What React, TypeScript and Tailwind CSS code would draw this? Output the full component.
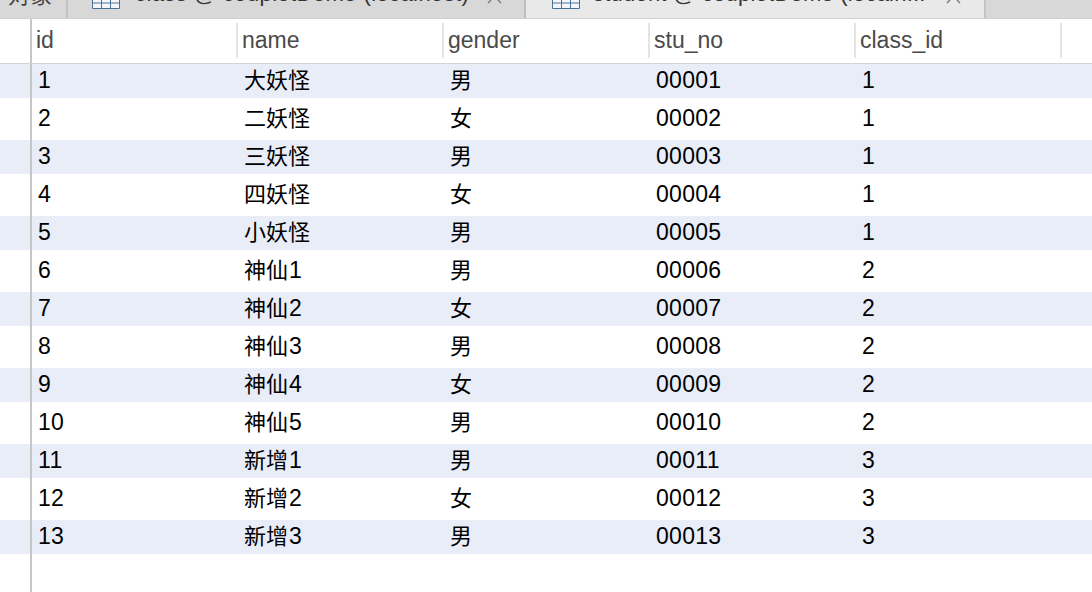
const rows: [string, string, string, string, string][] = [
  ["1", "大妖怪", "男", "00001", "1"],
  ["2", "二妖怪", "女", "00002", "1"],
  ["3", "三妖怪", "男", "00003", "1"],
  ["4", "四妖怪", "女", "00004", "1"],
  ["5", "小妖怪", "男", "00005", "1"],
  ["6", "神仙1", "男", "00006", "2"],
  ["7", "神仙2", "女", "00007", "2"],
  ["8", "神仙3", "男", "00008", "2"],
  ["9", "神仙4", "女", "00009", "2"],
  ["10", "神仙5", "男", "00010", "2"],
  ["11", "新增1", "男", "00011", "3"],
  ["12", "新增2", "女", "00012", "3"],
  ["13", "新增3", "男", "00013", "3"],
];
const heads = ["id", "name", "gender", "stu_no", "class_id"];

function TableIcon() {
  return (
    <svg width="28" height="9" viewBox="0 0 28 9" className="shrink-0" aria-hidden="true">
      <path d="M0.5 0V8.5H27.5V0M0.5 3H27.5M9.5 0V8.5M18.5 0V8.5" fill="#f4f6f9" stroke="#4a7196" strokeWidth="1" />
    </svg>
  );
}

function CloseTips() {
  return (
    <svg width="15" height="4" viewBox="0 0 15 4" className="shrink-0" aria-hidden="true">
      <path d="M4 0L1 3M11 0L14 3" fill="none" stroke="#777" strokeWidth="1.4" />
    </svg>
  );
}

export default function App() {
  return (
    <div className="w-[1092px] h-[592px] overflow-hidden bg-white flex flex-col font-['Liberation_Sans','Noto_Sans_CJK_SC',sans-serif]">
      <div className="h-[19px] shrink-0 bg-[#d8d8d8] flex border-b border-[#cfcfcf] overflow-hidden text-[22px] leading-[18px] text-[#333]">
        <div className="w-[68px] h-[18px] pl-[8px] border-r-2 border-[#c4c4c4] text-[#444]">
          <div className="-mt-[13px]">对象</div>
        </div>
        <div className="w-[458px] h-[18px] pl-[24px] border-r-2 border-[#bdbdbd] flex">
          <TableIcon />
          <div className="ml-[15px] -mt-[15px] w-[352px] whitespace-nowrap tracking-[0.4px]">class @ coupletDemo (localhost)</div>
          <CloseTips />
        </div>
        <div className="w-[460px] h-[18px] pl-[26px] bg-[#e9e9e9] border-r-2 border-[#c4c4c4] flex">
          <TableIcon />
          <div className="ml-[13px] -mt-[15px] w-[353px] whitespace-nowrap tracking-[0.22px]">student @ coupletDemo (localh...</div>
          <CloseTips />
        </div>
        <div className="flex-1" />
      </div>

      <div className="h-[45px] shrink-0 flex border-b border-[#d2d2d2] text-[23px] text-[#4a4a4a]">
        <div className="w-[32px] shrink-0 border-r-2 border-[#c6c6c6]" />
        {heads.map((h) => (
          <div key={h} className="w-[206px] shrink-0 pt-[4px]">
            <div className="h-[35px] pl-[4px] border-r-2 border-[#e4e4e4] leading-[34px]">{h}</div>
          </div>
        ))}
      </div>

      {rows.map((r, i) => {
        const match = r[1].match(/^(\D+)(\d)$/);
        return (
          <div
            key={r[0]}
            className={
              i % 2 === 0
                ? "h-[34px] shrink-0 flex bg-[#e9edf8] text-[22px] text-black"
                : "h-[42px] shrink-0 flex bg-white text-[22px] text-black"
            }
          >
            <div className="w-[32px] shrink-0 border-r-2 border-[#c6c6c6]" />
            <div className="w-[206px] shrink-0 pl-[6px] flex items-center text-[23px] tracking-[0.3px] pb-[2px]">{r[0]}</div>
            <div className="w-[206px] shrink-0 pl-[6px] flex items-center pb-[2px]">
              {match ? (
                <>
                  {match[1]}
                  <span className="text-[23px] ml-[1px]">{match[2]}</span>
                </>
              ) : (
                r[1]
              )}
            </div>
            <div className="w-[206px] shrink-0 pl-[6px] flex items-center pb-[2px]">{r[2]}</div>
            <div className="w-[206px] shrink-0 pl-[6px] flex items-center text-[23px] tracking-[0.3px] pb-[2px]">{r[3]}</div>
            <div className="w-[204px] shrink-0 pl-[6px] flex items-center text-[23px] pb-[2px]">{r[4]}</div>
          </div>
        );
      })}

      <div className="flex-1 flex">
        <div className="w-[32px] shrink-0 border-r-2 border-[#c6c6c6]" />
      </div>
    </div>
  );
}
